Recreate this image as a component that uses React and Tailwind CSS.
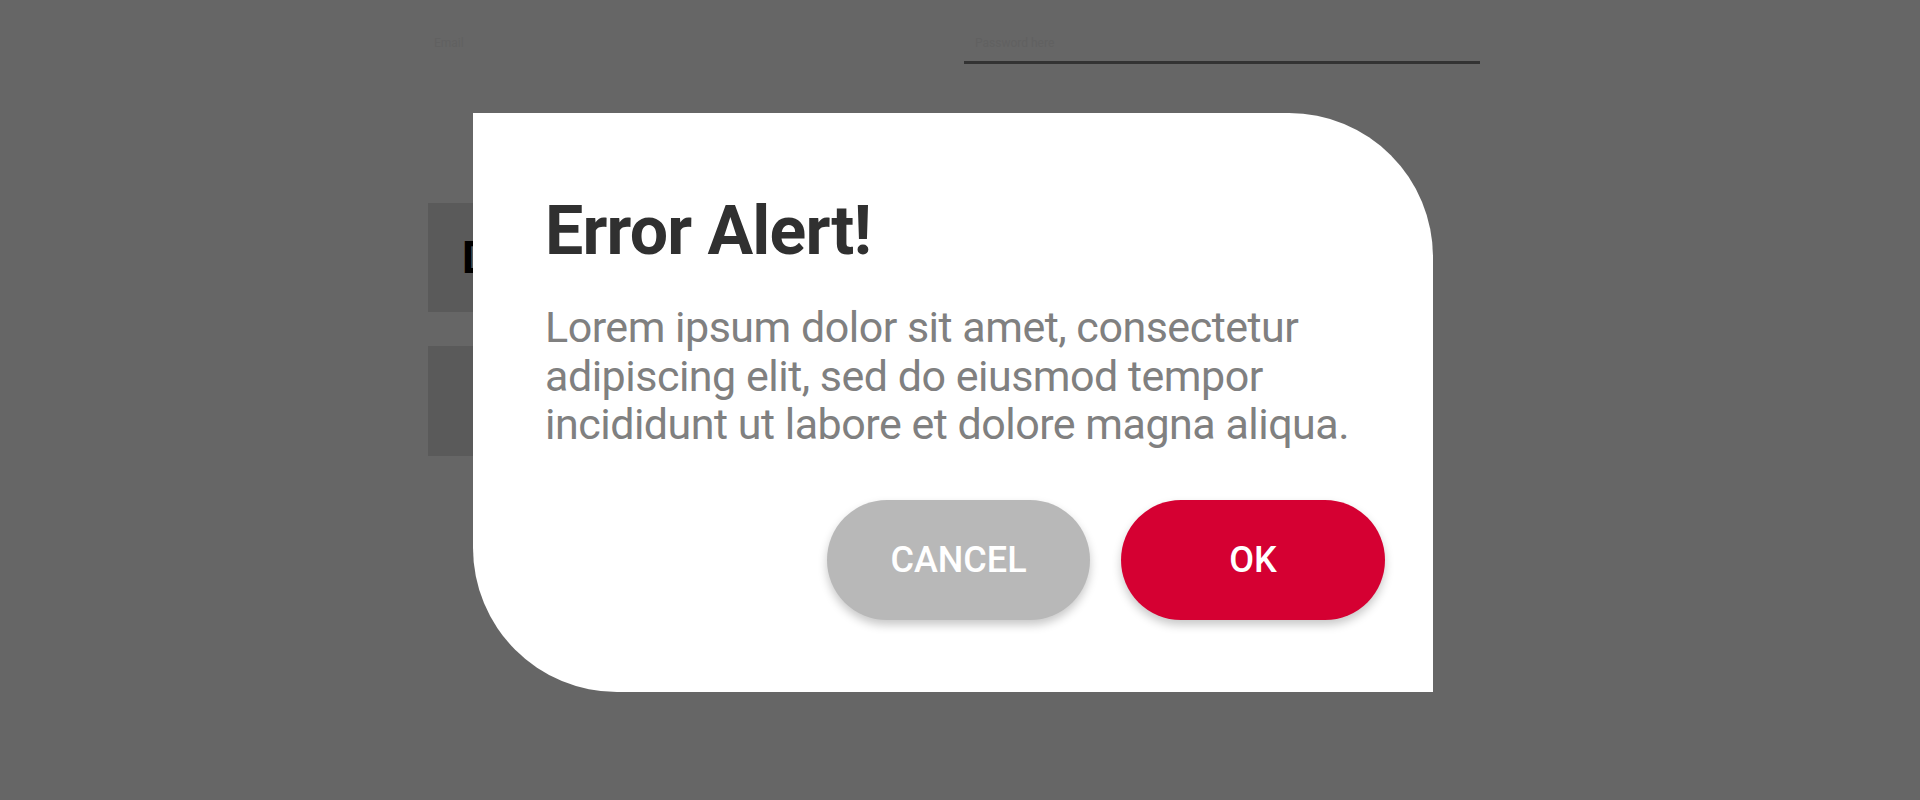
import React from 'react';

const font = { fontFamily: 'Roboto, "Noto Sans", sans-serif' };

const BackgroundPage = () => (
  <div className="w-full h-full bg-[#666666]">
    <div className="flex pt-[34px]">
      <div className="w-[434px]" />
      <div className="w-[530px] text-[12px] leading-[18px] text-[#616161]">Email</div>
      <div className="w-[516px] flex flex-col">
        <div className="pl-[11px] text-[12px] leading-[18px] text-[#616161]">Password here</div>
        <div className="mt-[9px] h-[3px] bg-[#333333]" />
      </div>
    </div>
    <div className="flex flex-col gap-[34px] pl-[428px] pt-[139px]">
      <div className="w-[45px] h-[109px] bg-[#5a5a5a] flex items-center pl-[34px] overflow-hidden">
        <span className="text-[44px] font-bold text-black leading-none">D</span>
      </div>
      <div className="w-[45px] h-[110px] bg-[#5a5a5a]" />
    </div>
  </div>
);

const AlertDialog = () => (
  <div className="absolute left-[473px] top-[113px] w-[960px] h-[579px] bg-white rounded-tr-[144px] rounded-bl-[144px] flex flex-col pl-[72px] pr-[48px] pt-[78px]">
    <h1 className="text-[68px] leading-[80px] font-bold text-[#303030] tracking-[-0.8px]">Error Alert!</h1>
    <p className="mt-[32px] text-[43px] leading-[48.5px] text-[#808080] tracking-[-0.5px]">
      Lorem ipsum dolor sit amet, consectetur<br />
      adipiscing elit, sed do eiusmod tempor<br />
      incididunt ut labore et dolore magna aliqua.
    </p>
    <div className="mt-[51px] flex justify-end gap-[31px]">
      <button className="w-[263px] h-[120px] rounded-full bg-[#b8b8b8] text-white text-[36px] font-medium shadow-[0_5px_10px_rgba(0,0,0,0.22)]">
        CANCEL
      </button>
      <button className="w-[264px] h-[120px] rounded-full bg-[#d50032] text-white text-[36px] font-medium shadow-[0_5px_10px_rgba(0,0,0,0.22)]">
        OK
      </button>
    </div>
  </div>
);

export default function App() {
  return (
    <div className="relative w-[1920px] h-[800px] overflow-hidden" style={font}>
      <BackgroundPage />
      <AlertDialog />
    </div>
  );
}
